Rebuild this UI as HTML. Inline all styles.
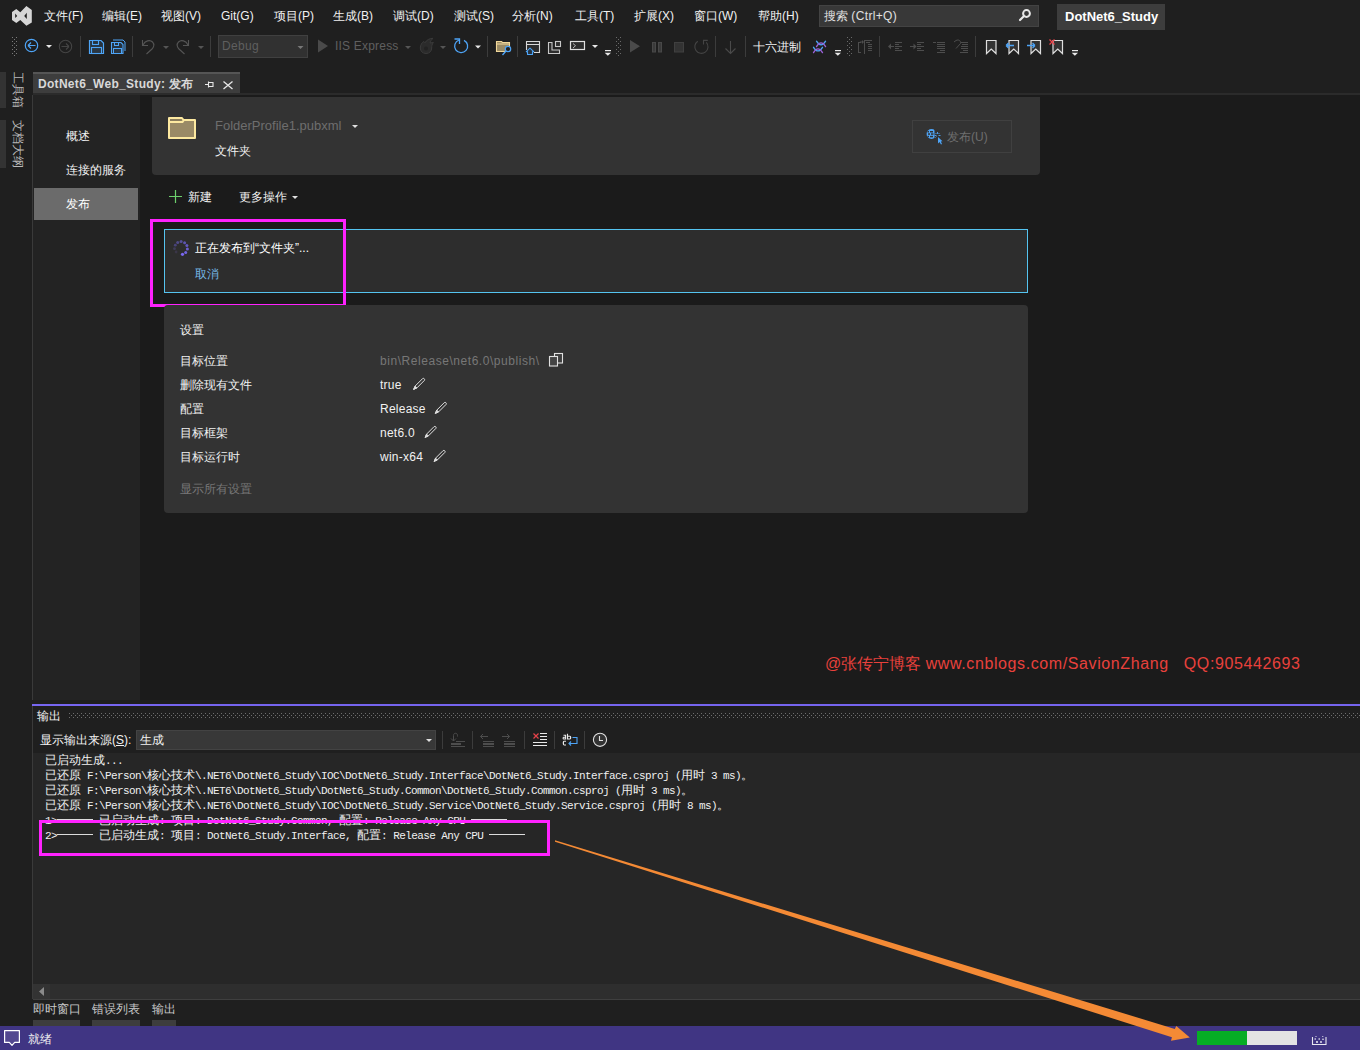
<!DOCTYPE html>
<html><head><meta charset="utf-8">
<style>
*{box-sizing:border-box;margin:0;padding:0}
html,body{width:1360px;height:1050px;overflow:hidden;background:#1f1f1f;font-family:"Liberation Sans",sans-serif;font-size:12px;color:#f1f1f1}
.a{position:absolute}
.t{position:absolute;white-space:nowrap;line-height:1}
.menu .t{top:10px;color:#f1f1f1}
svg{position:absolute;overflow:visible}
.sep{position:absolute;width:1px;background:#3f3f3f}
.mono{font-family:"Liberation Mono",monospace}
.ot{position:absolute;left:45px;height:15px;line-height:15px;white-space:nowrap;color:#f0f0f0}
.oc{font-weight:normal;font-size:12px;font-family:"Liberation Sans",sans-serif}
.ol{font-family:"Liberation Mono",monospace;font-size:11px;letter-spacing:-0.6px}
.od{display:inline-block;width:36px;height:1px;background:#dcdcdc;vertical-align:middle;position:relative;top:-1px}
</style></head><body>

<!-- ===== MENU BAR ===== -->
<div class="menu">
<svg style="left:0;top:0" width="40" height="30" viewBox="0 0 40 30"><path d="M16.3 9 L12 12 L12 20 L16.3 22.9 L20.3 19.9 L26.4 25.8 L31.8 22.4 L31.8 10 L26.4 6 L20.3 12.3 Z M15.2 13.6 L15.2 18.1 L17.2 16 Z M26.8 12.8 L26.8 18.9 L24.2 16.1 Z" fill="#d6d6d6" fill-rule="evenodd"/></svg>
<div class="t" style="left:44px">文件(F)</div>
<div class="t" style="left:102px">编辑(E)</div>
<div class="t" style="left:161px">视图(V)</div>
<div class="t" style="left:221px">Git(G)</div>
<div class="t" style="left:274px">项目(P)</div>
<div class="t" style="left:333px">生成(B)</div>
<div class="t" style="left:393px">调试(D)</div>
<div class="t" style="left:454px">测试(S)</div>
<div class="t" style="left:512px">分析(N)</div>
<div class="t" style="left:575px">工具(T)</div>
<div class="t" style="left:634px">扩展(X)</div>
<div class="t" style="left:694px">窗口(W)</div>
<div class="t" style="left:758px">帮助(H)</div>
</div>
<div class="a" style="left:819px;top:5px;width:220px;height:22px;background:#383838;border:1px solid #434343"></div>
<svg style="left:0;top:0" width="1100" height="30" viewBox="0 0 1100 30"><circle cx="1026.5" cy="13.5" r="3.4" fill="none" stroke="#e8e8e8" stroke-width="2"/><path d="M1023.8 16.2 L1020 20" stroke="#e8e8e8" stroke-width="2.2" stroke-linecap="round"/></svg>
<div class="t" style="left:824px;top:10px;color:#e0e0e0">搜索 <span style="letter-spacing:0.35px">(Ctrl+Q)</span></div>
<div class="a" style="left:1057px;top:4px;width:108px;height:26px;background:#3d3d3d"></div>
<div class="t" style="left:1065px;top:10px;color:#fff;font-weight:bold;font-size:13px">DotNet6_Study</div>

<!-- ===== TOOLBAR ===== -->
<svg style="left:0;top:0" width="1100" height="64" viewBox="0 0 1100 64">
<g fill="#7a7a7a">
<rect x="12" y="37" width="1" height="1"/><rect x="16" y="37" width="1" height="1"/><rect x="14" y="39" width="1" height="1"/>
<rect x="12" y="41" width="1" height="1"/><rect x="16" y="41" width="1" height="1"/><rect x="14" y="43" width="1" height="1"/>
<rect x="12" y="45" width="1" height="1"/><rect x="16" y="45" width="1" height="1"/><rect x="14" y="47" width="1" height="1"/>
<rect x="12" y="49" width="1" height="1"/><rect x="16" y="49" width="1" height="1"/><rect x="14" y="51" width="1" height="1"/>
<rect x="12" y="53" width="1" height="1"/><rect x="16" y="53" width="1" height="1"/><rect x="14" y="55" width="1" height="1"/>
</g>
<g fill="#6a6a6a">
<rect x="616" y="37" width="1" height="1"/><rect x="620" y="37" width="1" height="1"/><rect x="618" y="39" width="1" height="1"/>
<rect x="616" y="41" width="1" height="1"/><rect x="620" y="41" width="1" height="1"/><rect x="618" y="43" width="1" height="1"/>
<rect x="616" y="45" width="1" height="1"/><rect x="620" y="45" width="1" height="1"/><rect x="618" y="47" width="1" height="1"/>
<rect x="616" y="49" width="1" height="1"/><rect x="620" y="49" width="1" height="1"/><rect x="618" y="51" width="1" height="1"/>
<rect x="616" y="53" width="1" height="1"/><rect x="620" y="53" width="1" height="1"/><rect x="618" y="55" width="1" height="1"/>
<rect x="847" y="37" width="1" height="1"/><rect x="851" y="37" width="1" height="1"/><rect x="849" y="39" width="1" height="1"/>
<rect x="847" y="41" width="1" height="1"/><rect x="851" y="41" width="1" height="1"/><rect x="849" y="43" width="1" height="1"/>
<rect x="847" y="45" width="1" height="1"/><rect x="851" y="45" width="1" height="1"/><rect x="849" y="47" width="1" height="1"/>
<rect x="847" y="49" width="1" height="1"/><rect x="851" y="49" width="1" height="1"/><rect x="849" y="51" width="1" height="1"/>
<rect x="847" y="53" width="1" height="1"/><rect x="851" y="53" width="1" height="1"/><rect x="849" y="55" width="1" height="1"/>
</g>
<!-- separators -->
<g fill="#3c3c3c">
<rect x="80" y="36" width="1" height="21"/><rect x="132" y="36" width="1" height="21"/><rect x="210" y="36" width="1" height="21"/>
<rect x="487" y="36" width="1" height="21"/><rect x="517" y="36" width="1" height="21"/><rect x="715" y="36" width="1" height="21"/>
<rect x="745" y="36" width="1" height="21"/><rect x="879" y="36" width="1" height="21"/><rect x="975" y="36" width="1" height="21"/>
</g>
<!-- back/forward -->
<circle cx="31.5" cy="45.5" r="6.2" fill="none" stroke="#4ea4f6" stroke-width="1.2"/>
<path d="M28 45.5 H35.5 M28 45.5 L31 42.5 M28 45.5 L31 48.5" stroke="#4ea4f6" stroke-width="1.2" fill="none"/>
<path d="M46 45 H52 L49 48 Z" fill="#e8e8e8"/>
<circle cx="65.5" cy="46.5" r="6.2" fill="none" stroke="#444" stroke-width="1.1"/>
<path d="M69 46.5 H61.5 M69 46.5 L66 43.5 M69 46.5 L66 49.5" stroke="#444" stroke-width="1.1" fill="none"/>
<!-- save -->
<path d="M89.5 40.5 H101 L103.5 43 V53.5 H89.5 Z" fill="#26323e" stroke="#4ea4f6" stroke-width="1.2"/>
<rect x="92.5" y="40.5" width="6" height="4" fill="none" stroke="#4ea4f6" stroke-width="1.1"/>
<rect x="91.5" y="47.5" width="10" height="6" fill="#2a3642" stroke="#4ea4f6" stroke-width="1.1"/>
<!-- save all -->
<path d="M113 40 H123 L125 42 V51" fill="none" stroke="#4ea4f6" stroke-width="1"/>
<path d="M111.5 42.5 H121 L123 44.5 V53.5 H111.5 Z" fill="#26323e" stroke="#4ea4f6" stroke-width="1.1"/>
<rect x="114.5" y="42.5" width="4" height="3" fill="none" stroke="#4ea4f6" stroke-width="1"/>
<rect x="113.5" y="48.5" width="8" height="5" fill="#2a3642" stroke="#4ea4f6" stroke-width="1"/>
<!-- undo/redo -->
<path d="M142.5 40 V45.5 H148" fill="none" stroke="#555" stroke-width="1.1"/>
<path d="M143 45 C145 40.5 150 39.5 152.5 42 C155 44.5 153.5 47.5 152 49 L146.5 54" fill="none" stroke="#555" stroke-width="1.1"/>
<path d="M163 46 H169 L166 49 Z" fill="#555"/>
<path d="M188.5 40 V45.5 H183" fill="none" stroke="#555" stroke-width="1.1"/>
<path d="M188 45 C186 40.5 181 39.5 178.5 42 C176 44.5 177.5 47.5 179 49 L184.5 54" fill="none" stroke="#555" stroke-width="1.1"/>
<path d="M198 46 H204 L201 49 Z" fill="#555"/>
<!-- debug combo -->
<rect x="218.5" y="35.5" width="89" height="22" fill="#313131" stroke="#404040"/>
<path d="M297.5 46 H303.5 L300.5 49 Z" fill="#777"/>
<!-- play IIS -->
<path d="M318 39.5 V52.5 L328 46 Z" fill="#4a4a4a"/>
<path d="M405 46 H411 L408 49 Z" fill="#555"/>
<path d="M426 53.5 C422.5 53.5 420.3 51 420.3 48 C420.3 45 422 42.5 423.8 41.5 L425 42.8 C426.5 40 429.5 38.3 433 38.3 C431.5 39.5 430.5 41 430 43 L433.4 42.5 C431.8 44.5 431.7 46 431.7 48 C431.7 51 429.5 53.5 426 53.5 Z" fill="#2b2b2b" stroke="#3a3a3a" stroke-width="1"/><circle cx="426" cy="48.5" r="2" fill="#222"/>
<path d="M440 46 H446 L443 49 Z" fill="#555"/>
<!-- refresh -->
<path d="M459 40 A6.5 6.5 0 1 0 464 40.3" fill="none" stroke="#4ea4f6" stroke-width="1.3"/>
<path d="M454.5 39 H459.5 V44" fill="none" stroke="#4ea4f6" stroke-width="1.3"/>
<path d="M475 45.5 H481 L478 48.5 Z" fill="#e8e8e8"/>
<!-- folder search -->
<path d="M496.5 41.5 H501.5 L502.5 42.5 H509.5 V51.5 H496.5 Z" fill="#9a8a64" stroke="#f2d89a" stroke-width="1.1"/>
<rect x="496.5" y="43.5" width="13" height="1" fill="#f2d89a"/>
<circle cx="508" cy="49" r="2.7" fill="#1f1f1f" stroke="#4ea4f6" stroke-width="1.2"/>
<path d="M506 51 L502.5 55" stroke="#4ea4f6" stroke-width="1.3"/>
<!-- browser home -->
<path d="M526.5 50 V41.5 H539.5 V52.5 H534" fill="#2d2d2d" stroke="#d8d8d8" stroke-width="1.1"/>
<rect x="527" y="44" width="12" height="1" fill="#d8d8d8"/>
<path d="M530 48.2 L526.3 51.6 H527.5 V54.5 H532.5 V51.6 H533.7 Z" fill="#26323e" stroke="#4ea4f6" stroke-width="1.1" stroke-linejoin="round"/>
<!-- window -->
<path d="M548.5 42.5 H552 V50 H559.5 V53.5 H548.5 Z" fill="#2d2d2d" stroke="#c8c8c8" stroke-width="1.1"/>
<rect x="555.5" y="41.5" width="5" height="5" fill="#2d2d2d" stroke="#c8c8c8" stroke-width="1.1"/>
<!-- terminal -->
<rect x="570.5" y="41.5" width="14" height="8" fill="#2d2d2d" stroke="#e0e0e0" stroke-width="1.2"/>
<path d="M573 43.5 L575.5 45.7 L573 48" fill="none" stroke="#c8c8c8" stroke-width="0.9"/>
<path d="M592 45 H598 L595 48 Z" fill="#e8e8e8"/>
<!-- overflow -->
<g fill="#e8e8e8">
<rect x="605" y="50" width="6" height="1.2"/><path d="M604.7 52.7 H611 L607.85 55.8 Z"/>
<rect x="835" y="50" width="6" height="1.2"/><path d="M834.7 52.7 H841 L837.85 55.8 Z"/>
<rect x="1072" y="50" width="6" height="1.2"/><path d="M1071.7 52.7 H1078 L1074.85 55.8 Z"/>
</g>
<!-- debug controls -->
<path d="M630 40 V52.6 L640 46.3 Z" fill="#4a4a4a"/>
<rect x="652.5" y="42.5" width="3" height="9.5" fill="#3a3a3a" stroke="#484848"/><rect x="658.5" y="42.5" width="3" height="9.5" fill="#3a3a3a" stroke="#484848"/>
<rect x="674.5" y="42.5" width="9" height="9.5" fill="#333" stroke="#404040"/>
<path d="M697.8 41.2 A6.6 6.6 0 1 0 706.3 42.3" fill="none" stroke="#444" stroke-width="1.1"/>
<path d="M707.8 40.4 H703.5 V44.6" fill="none" stroke="#444" stroke-width="1.1"/>
<path d="M730.5 41 V53.5 M725.5 48.5 L730.5 53.5 L735.5 48.5" fill="none" stroke="#4a4a4a" stroke-width="1.1"/>
<!-- hex icon -->
<path d="M816.5 41.2 Q821 48.5 825.6 41.2 M813.5 47.3 Q818 54.6 822.5 47.3" fill="none" stroke="#4ea4f6" stroke-width="1.3" stroke-linecap="round"/>
<path d="M816.5 46.6 Q821 39 825.6 46.6 M813.5 52.6 Q818 45 822.5 52.6" fill="none" stroke="#9a62d8" stroke-width="1.3" stroke-linecap="round"/>
<!-- indent icons -->
<g fill="#4d4d4d">
<rect x="858" y="42" width="1" height="11"/><rect x="858" y="42" width="3" height="1"/><rect x="858" y="52" width="3" height="1"/>
<path d="M860 41.5 H862 V40 L864 42 L862 44 V42.5 H860 Z"/>
<rect x="864" y="40" width="1" height="14"/><rect x="864" y="40" width="8" height="1"/>
<rect x="866" y="42" width="4" height="1"/><rect x="868" y="44" width="4" height="1"/><rect x="868" y="46" width="4" height="1"/><rect x="868" y="48" width="4" height="1"/><rect x="868" y="50" width="4" height="1"/>
<rect x="895" y="42" width="7" height="1"/><rect x="895" y="44" width="4" height="1"/><rect x="895" y="46" width="7" height="1"/><rect x="895" y="48" width="4" height="1"/><rect x="895" y="50" width="7" height="1"/>
<rect x="889" y="46" width="5" height="1"/><path d="M888 46.5 L891 43.5 V49.5 Z"/>
<rect x="917" y="42" width="7" height="1"/><rect x="917" y="44" width="4" height="1"/><rect x="917" y="46" width="7" height="1"/><rect x="917" y="48" width="4" height="1"/><rect x="917" y="50" width="7" height="1"/>
<rect x="910" y="46" width="5" height="1"/><path d="M916.5 46.5 L913.5 43.5 V49.5 Z"/>
<rect x="933" y="42" width="3" height="1"/>
<rect x="937" y="42" width="8" height="1"/><rect x="937" y="44" width="8" height="1"/><rect x="937" y="46" width="8" height="1"/><rect x="937" y="48" width="8" height="1"/><rect x="940" y="50" width="5" height="1"/><rect x="937" y="52" width="8" height="1"/>
<rect x="961" y="42" width="7" height="1"/><rect x="962" y="44" width="6" height="1"/><rect x="961" y="46" width="7" height="1"/><rect x="961" y="48" width="7" height="1"/><rect x="963" y="50" width="5" height="1"/><rect x="960" y="52" width="8" height="1"/>
</g>
<path d="M954 42 L956 40.5 C959 39 961 41 960.5 43.5 L956 48.5" fill="none" stroke="#4d4d4d" stroke-width="1"/>
<!-- bookmarks -->
<g fill="#333" stroke="#dedede" stroke-width="1.2">
<path d="M986.5 40.5 H996 V53.5 L991.25 49 L986.5 53.5 Z"/>
<path d="M1009 40.5 H1018.5 V53.5 L1013.75 49 L1009 53.5 Z"/>
<path d="M1031 40.5 H1040.5 V53.5 L1035.75 49 L1031 53.5 Z"/>
<path d="M1053 40.5 H1062.5 V53.5 L1057.75 49 L1053 53.5 Z"/>
</g>
<path d="M1006 45.5 H1014 M1006 45.5 L1008.5 43 M1006 45.5 L1008.5 48" stroke="#4ea4f6" stroke-width="1.3" fill="none"/>
<path d="M1027 45.5 H1035 M1035 45.5 L1032.5 43 M1035 45.5 L1032.5 48" stroke="#4ea4f6" stroke-width="1.3" fill="none"/>
<path d="M1049.5 39.5 L1054.5 44.5 M1054.5 39.5 L1049.5 44.5" stroke="#e8434a" stroke-width="1.3"/>
</svg>
<div class="t" style="left:222px;top:40px;color:#5f5f5f;font-size:12px;letter-spacing:0.3px">Debug</div>
<div class="t" style="left:335px;top:40px;color:#5f5f5f;font-size:12px;letter-spacing:0.2px">IIS Express</div>
<div class="t" style="left:753px;top:41px;color:#f1f1f1">十六进制</div>


<!-- ===== LEFT STRIP ===== -->
<div class="a" style="left:0;top:72px;width:6px;height:36px;background:#333"></div>
<div class="a" style="left:0;top:120px;width:6px;height:48px;background:#333"></div>

<div class="t" style="left:23.5px;top:72px;transform-origin:0 0;transform:rotate(90deg);color:#b8b8b8;line-height:12px">工具箱</div>
<div class="t" style="left:23.5px;top:120px;transform-origin:0 0;transform:rotate(90deg);color:#b8b8b8;line-height:12px">文档大纲</div>
<!-- ===== TAB ===== -->
<div class="a" style="left:33px;top:72px;width:207px;height:21px;background:#3d3d3d;border-top:2px solid #555"></div>
<div class="t" style="left:38px;top:78px;font-weight:bold;font-size:12px;color:#d8d8d8"><span style="letter-spacing:0.3px">DotNet6_Web_Study:</span> 发布</div>
<svg style="left:0;top:0" width="240" height="95" viewBox="0 0 240 95"><path d="M205 84.5 H208.5 M208.5 81.5 V87.5 M208.5 82.5 H213 V86.5 H208.5" fill="none" stroke="#e8e8e8" stroke-width="1.1"/><path d="M223.5 81.5 L232.5 89 M232.5 81.5 L223.5 89" stroke="#e8e8e8" stroke-width="1.3"/></svg>
<div class="a" style="left:33px;top:93px;width:1327px;height:2px;background:#2b2b2b"></div>

<!-- ===== DOC AREA ===== -->
<div class="a" style="left:32px;top:95px;width:1px;height:605px;background:#3a3a3a"></div>
<div class="a" style="left:33px;top:95px;width:107px;height:605px;background:#232323"></div>
<div class="a" style="left:140px;top:95px;width:1220px;height:605px;background:#1b1b1b"></div>
<div class="t" style="left:66px;top:130px">概述</div>
<div class="t" style="left:66px;top:164px">连接的服务</div>
<div class="a" style="left:34px;top:188px;width:104px;height:32px;background:#6b6b6b"></div>
<div class="t" style="left:66px;top:198px;color:#fff">发布</div>

<!-- card 1 -->
<div class="a" style="left:152px;top:97px;width:888px;height:78px;background:#333;border-radius:0 0 4px 4px"></div>
<div class="t" style="left:215px;top:119px;color:#6e6e6e;font-size:13px">FolderProfile1.pubxml</div>
<div class="t" style="left:215px;top:145px">文件夹</div>
<div class="a" style="left:912px;top:120px;width:100px;height:33px;border:1px solid #404040"></div>
<div class="t" style="left:947px;top:131px;color:#6e6e6e">发布(U)</div>

<div class="t" style="left:188px;top:191px">新建</div>
<div class="t" style="left:239px;top:191px">更多操作</div>

<!-- progress box -->
<div class="a" style="left:164px;top:229px;width:864px;height:64px;background:#2d2d2d;border:1px solid #55c4f0"></div>
<div class="t" style="left:195px;top:242px;color:#fff">正在发布到“文件夹”...</div>
<div class="t" style="left:195px;top:268px;color:#75b7e6">取消</div>
<div class="a" style="left:150px;top:219px;width:196px;height:88px;border:3px solid #ff22ff"></div>

<!-- settings card -->
<div class="a" style="left:164px;top:305px;width:864px;height:208px;background:#333;border-radius:4px"></div>
<div class="t" style="left:180px;top:324px">设置</div>
<div class="t" style="left:180px;top:355px">目标位置</div>
<div class="t" style="left:180px;top:379px">删除现有文件</div>
<div class="t" style="left:180px;top:403px">配置</div>
<div class="t" style="left:180px;top:427px">目标框架</div>
<div class="t" style="left:180px;top:451px">目标运行时</div>
<div class="t" style="left:180px;top:483px;color:#777">显示所有设置</div>
<div class="t" style="left:380px;top:355px;color:#777;letter-spacing:0.55px">bin\Release\net6.0\publish\</div>
<div class="t" style="left:380px;top:379px;letter-spacing:0.25px">true</div>
<div class="t" style="left:380px;top:403px;letter-spacing:0.25px">Release</div>
<div class="t" style="left:380px;top:427px;letter-spacing:0.25px">net6.0</div>
<div class="t" style="left:380px;top:451px;letter-spacing:0.25px">win-x64</div>

<div class="t" style="left:825px;top:656px;color:#e8413c;font-size:16px">@张传宁博客 <span style="letter-spacing:0.6px">www.cnblogs.com/SavionZhang &nbsp;&nbsp;QQ:905442693</span></div>

<!-- ===== OUTPUT PANEL ===== -->
<div class="a" style="left:32px;top:704px;width:1328px;height:2px;background:#7766f0"></div>
<div class="a" style="left:32px;top:706px;width:1px;height:293px;background:#3a3a3a"></div>
<div class="t" style="left:37px;top:710px">输出</div>
<div class="t" style="left:40px;top:734px">显示输出来源(<u>S</u>):</div>
<div class="a" style="left:136px;top:730px;width:300px;height:20px;background:#383838;border:1px solid #434343"></div>
<div class="t" style="left:140px;top:734px">生成</div>
<div class="a" style="left:33px;top:753px;width:1327px;height:231px;background:#262626"></div>
<div id="outtext"><div class="ot" style="top:753px"><b class="oc">已启动生成</b><span class="ol">...</span></div>
<div class="ot" style="top:768px"><b class="oc">已还原</b><span class="ol">&#160;F:\Person\</span><b class="oc">核心技术</b><span class="ol">\.NET6\DotNet6_Study\IOC\DotNet6_Study.Interface\DotNet6_Study.Interface.csproj&#160;(</span><b class="oc">用时</b><span class="ol">&#160;3&#160;ms)</span><b class="oc">。</b></div>
<div class="ot" style="top:783px"><b class="oc">已还原</b><span class="ol">&#160;F:\Person\</span><b class="oc">核心技术</b><span class="ol">\.NET6\DotNet6_Study\DotNet6_Study.Common\DotNet6_Study.Common.csproj&#160;(</span><b class="oc">用时</b><span class="ol">&#160;3&#160;ms)</span><b class="oc">。</b></div>
<div class="ot" style="top:798px"><b class="oc">已还原</b><span class="ol">&#160;F:\Person\</span><b class="oc">核心技术</b><span class="ol">\.NET6\DotNet6_Study\IOC\DotNet6_Study.Service\DotNet6_Study.Service.csproj&#160;(</span><b class="oc">用时</b><span class="ol">&#160;8&#160;ms)</span><b class="oc">。</b></div>
<div class="ot" style="top:813px"><span class="ol">1&gt;</span><i class="od"></i><span class="ol">&#160;</span><b class="oc">已启动生成</b><span class="ol">:&#160;</span><b class="oc">项目</b><span class="ol">:&#160;</span><span class="ol">DotNet6_Study.Common</span><span class="ol">,&#160;</span><b class="oc">配置</b><span class="ol">:&#160;</span><span class="ol">Release&#160;Any&#160;CPU&#160;</span><i class="od"></i></div>
<div class="ot" style="top:828px"><span class="ol">2&gt;</span><i class="od"></i><span class="ol">&#160;</span><b class="oc">已启动生成</b><span class="ol">:&#160;</span><b class="oc">项目</b><span class="ol">:&#160;</span><span class="ol">DotNet6_Study.Interface</span><span class="ol">,&#160;</span><b class="oc">配置</b><span class="ol">:&#160;</span><span class="ol">Release&#160;Any&#160;CPU&#160;</span><i class="od"></i></div></div>
<div class="a" style="left:39px;top:820px;width:511px;height:36px;border:3px solid #ff22ff"></div>

<div class="a" style="left:33px;top:984px;width:1327px;height:15px;background:#2e2e2e"></div>
<div class="a" style="left:33px;top:999px;width:1327px;height:1px;background:#3f3f3f"></div>

<div class="t" style="left:33px;top:1003px;color:#c8c8c8">即时窗口</div>
<div class="t" style="left:92px;top:1003px;color:#c8c8c8">错误列表</div>
<div class="t" style="left:152px;top:1003px;color:#c8c8c8">输出</div>
<div class="a" style="left:33px;top:1020px;width:47px;height:6px;background:#3d3d3d"></div>
<div class="a" style="left:92px;top:1020px;width:48px;height:6px;background:#3d3d3d"></div>
<div class="a" style="left:152px;top:1020px;width:24px;height:6px;background:#3d3d3d"></div>

<!-- ===== STATUS BAR ===== -->
<div class="a" style="left:0;top:1026px;width:1360px;height:24px;background:#403583"></div>
<div class="t" style="left:28px;top:1033px">就绪</div>
<div class="a" style="left:1197px;top:1031px;width:100px;height:14px;background:#e3e3e3"></div>
<div class="a" style="left:1197px;top:1031px;width:50px;height:14px;background:#06ad25"></div>

<!-- doc icons -->
<svg style="left:0;top:0" width="1360" height="700" viewBox="0 0 1360 700">
<path d="M169 118 H182 L183.6 120 H195 V138 H169 Z" fill="#9a8a66" stroke="#fde9a0" stroke-width="2" stroke-linejoin="round"/>
<path d="M169 122 H182.5 L184 120" fill="none" stroke="#fde9a0" stroke-width="2"/>
<rect x="170" y="119" width="11.5" height="2" fill="#8a7c5c"/>
<path d="M352 125 H358 L355 128 Z" fill="#e0e0e0"/>
<!-- publish btn icon -->
<circle cx="931.5" cy="134" r="4.9" fill="#4ea4f6"/>
<g fill="#333"><rect x="927.5" y="131" width="1.5" height="1.5"/><rect x="930" y="131" width="3" height="1.5"/><rect x="928" y="133.3" width="2" height="1.5"/><rect x="931" y="133.3" width="2.5" height="1.5"/><rect x="927.5" y="135.8" width="1.5" height="1.5"/><rect x="930" y="135.8" width="3" height="1.5"/><rect x="934.5" y="129" width="3" height="10"/></g>
<path d="M937.5 132 V134 M934.5 135.5 H936.5 M938.5 135.5 H940.5 M935.5 133 L936.5 134 M939.5 133 L938.5 134 M935.5 137.5 L936.5 136.5" stroke="#4ea4f6" stroke-width="0.9"/>
<path d="M938 137 L938 143.5 L939.5 142 L941 144.5 L942 144 L940.8 141.5 L942.5 141.3 Z" fill="#4ea4f6"/>
<!-- plus -->
<path d="M175.5 190 V203 M169 196.5 H182" stroke="#6ccf6c" stroke-width="1.2"/>
<path d="M292 196 H298 L295 199 Z" fill="#e0e0e0"/>
<!-- spinner -->
<g>
<circle cx="181.1" cy="241.6" r="1.5" fill="#56509a"/>
<circle cx="184.6" cy="242.8" r="1.5" fill="#5d55b0"/>
<circle cx="186.9" cy="245.5" r="1.5" fill="#6459c0"/>
<circle cx="187.4" cy="249.1" r="1.5" fill="#6c5fd0"/>
<circle cx="185.7" cy="252.4" r="1.5" fill="#7163e0"/>
<circle cx="182.5" cy="254.3" r="1.6" fill="#7a68f0"/>
<circle cx="176.1" cy="252" r="1.4" fill="#3a3648"/>
<circle cx="174.5" cy="248.7" r="1.4" fill="#403c5a"/>
<circle cx="175.3" cy="245.2" r="1.4" fill="#48437a"/>
<circle cx="177.7" cy="242.4" r="1.5" fill="#4f4a88"/>
</g>
<!-- copy icon -->
<rect x="554.5" y="353.5" width="8" height="9.5" fill="#3d3d3d" stroke="#e0e0e0" stroke-width="1.1"/>
<rect x="549.5" y="356.5" width="8" height="9.5" fill="#444" stroke="#e0e0e0" stroke-width="1.1"/>
<!-- pencils -->
<g id="pen"><path d="M413.6 389.4 L415.1 386.1 L422.6 378.6 A1.3 1.3 0 0 1 424.4 380.4 L416.9 387.9 Z" fill="none" stroke="#e0e0e0" stroke-width="1"/><path d="M413.6 389.4 L415.1 386.1 L416.9 387.9 Z" fill="#e0e0e0" stroke="#e0e0e0" stroke-width="0.8"/></g>
<use href="#pen" x="21.7" y="24"/>
<use href="#pen" x="11.5" y="48"/>
<use href="#pen" x="20.5" y="72"/>
</svg>

<!-- output header grip -->
<svg style="left:0;top:700px" width="1360" height="60" viewBox="0 700 1360 60">
<defs><pattern id="grip" x="69" y="713" width="4" height="4" patternUnits="userSpaceOnUse">
<rect x="0" y="0" width="1" height="1" fill="#6e6e6e"/><rect x="2" y="2" width="1" height="1" fill="#6e6e6e"/></pattern></defs>
<rect x="69" y="713" width="1291" height="5" fill="url(#grip)"/>
<!-- combo arrow -->
<path d="M426 739 H432 L429 742 Z" fill="#e0e0e0"/>
<g fill="#3c3c3c"><rect x="442" y="731" width="1" height="18"/><rect x="472" y="731" width="1" height="18"/><rect x="524" y="731" width="1" height="18"/><rect x="554" y="731" width="1" height="18"/><rect x="584" y="731" width="1" height="18"/></g>
<g fill="#4d4d4d">
<rect x="456" y="741" width="9" height="1"/><rect x="451" y="743" width="10" height="2"/><rect x="451" y="746" width="14" height="1"/>
<rect x="483" y="741" width="11" height="1"/><rect x="483" y="743" width="11" height="2"/><rect x="483" y="746" width="11" height="1"/>
<rect x="504" y="741" width="11" height="1"/><rect x="504" y="743" width="11" height="2"/><rect x="504" y="746" width="11" height="1"/>
</g>
<path d="M453.5 741 V735.5 C453.5 732.5 457.5 732.5 457.5 735.5 V736.5 M451 738.5 L453.5 741 L456 738.5" fill="none" stroke="#4d4d4d" stroke-width="1"/>
<path d="M480.5 736.5 H488 M480.5 736.5 L483 734 M480.5 736.5 L483 739" fill="none" stroke="#4d4d4d" stroke-width="1"/>
<path d="M502 736.5 H509.5 M509.5 736.5 L507 734 M509.5 736.5 L507 739" fill="none" stroke="#4d4d4d" stroke-width="1"/>
<!-- clear all -->
<path d="M533.5 733.5 L538.5 738.5 M538.5 733.5 L533.5 738.5" stroke="#e8434a" stroke-width="1.2"/>
<g fill="#e8e8e8"><rect x="540" y="733" width="7" height="1"/><rect x="540" y="736" width="7" height="1"/><rect x="540" y="739" width="7" height="1"/><rect x="533" y="742" width="14" height="1"/><rect x="533" y="745" width="14" height="1"/></g>
<!-- word wrap -->
<g fill="none" stroke="#e8e8e8" stroke-width="1.1">
<path d="M563.5 735.2 H565.6 V739 H563.6 C563 739 562.9 737.3 563.6 737.2 H565.6"/>
<path d="M567.5 733.8 V739 H570 C571 739 571 736.2 570 736.2 H567.5"/>
<path d="M566 741.2 H564 C563 741.2 563 745 564 745 H566"/>
</g>
<path d="M572.5 737.5 H577 V743.5 H569 M571 741.5 L569 743.5 L571 745.5" fill="none" stroke="#4ea4f6" stroke-width="1.1"/>
<!-- clock -->
<circle cx="600" cy="739.8" r="6.6" fill="#333" stroke="#e0e0e0" stroke-width="1.1"/>
<path d="M599.5 736 V740.5 H603" fill="none" stroke="#e0e0e0" stroke-width="1.1"/>
</svg>

<!-- scroll arrow -->
<div class="a" style="left:33px;top:984px;width:17px;height:15px;background:#333"></div>
<svg style="left:0;top:980px" width="60" height="20" viewBox="0 980 60 20"><path d="M39 991.5 L44 987 V996 Z" fill="#8a8a8a"/></svg>

<!-- status bar icons -->
<svg style="left:0;top:1026px" width="1360" height="24" viewBox="0 1026 1360 24">
<path d="M4.6 1030.6 H19.4 V1042.4 H14.7 L12 1045.3 L9.3 1042.4 H4.6 Z" fill="#534890" stroke="#fff" stroke-width="1.2" stroke-linejoin="round"/>
<path d="M1312.5 1037 V1044.5 H1326 V1037" fill="none" stroke="#e8e8f0" stroke-width="1.1"/>
<g fill="#f0f0f8"><circle cx="1317" cy="1042" r="1"/><circle cx="1321" cy="1042" r="0.9"/><circle cx="1315.2" cy="1039" r="0.8"/><circle cx="1319.2" cy="1039" r="0.8"/><circle cx="1323" cy="1039.2" r="0.8"/><circle cx="1316" cy="1036.5" r="0.6"/><circle cx="1322.8" cy="1036.5" r="0.6"/></g>
</svg>

<!-- orange arrow -->
<svg style="left:0;top:0" width="1360" height="1050" viewBox="0 0 1360 1050">
<path d="M555 840.3 L1174.8 1028.9 L1176.3 1026 L1189.8 1037.4 L1171 1040.7 L1171.9 1037.2 L555 841.7 Z" fill="#f48a35"/>
</svg>

</body></html>
